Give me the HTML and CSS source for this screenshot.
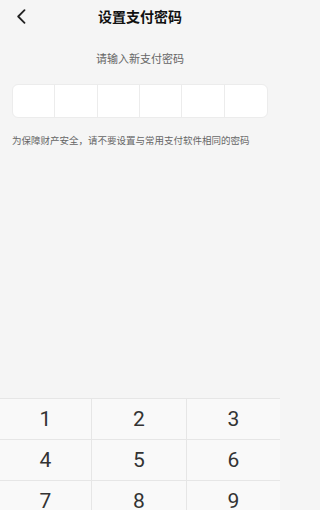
FILE: index.html
```html
<!DOCTYPE html>
<html lang="zh">
<head>
<meta charset="utf-8">
<link rel="stylesheet" href="styles.css">
</head>
<body>
<div class="page">
  <header class="nav">
    <span class="back">
      <svg width="10" height="15" viewBox="0 0 10 15"><path d="M8.5 1.2 L2.2 7.5 L8.5 13.8" fill="none" stroke="#222" stroke-width="1.8" stroke-linecap="round" stroke-linejoin="round"/></svg>
    </span>
    <h1 class="title">设置支付密码</h1>
  </header>
  <p class="subtitle">请输入新支付密码</p>
  <div class="pwd">
    <span class="cell"></span><span class="cell"></span><span class="cell"></span><span class="cell"></span><span class="cell"></span><span class="cell"></span>
  </div>
  <p class="hint">为保障财产安全，请不要设置与常用支付软件相同的密码</p>
  <div class="keyboard">
    <span class="key">1</span><span class="key">2</span><span class="key">3</span>
    <span class="key">4</span><span class="key">5</span><span class="key">6</span>
    <span class="key">7</span><span class="key">8</span><span class="key">9</span>
    <span class="key blank"></span><span class="key">0</span><span class="key blank"></span>
  </div>
</div>
</body>
</html>
```
FILE: styles.css
```css
html, body {
  margin: 0;
  padding: 0;
  height: 510px;
  overflow: hidden;
  background: #f5f5f5;
}
.page {
  width: 280px;
  height: 563px;
  display: flex;
  flex-direction: column;
  font-family: "Noto Sans CJK SC", "Noto Sans", Roboto, sans-serif;
}
.nav {
  position: relative;
  height: 33px;
  display: flex;
  align-items: center;
  justify-content: center;
}
.back {
  position: absolute;
  left: 16px;
  top: 9px;
  width: 10px;
  height: 15px;
  display: flex;
}
.title {
  margin: 0;
  font-size: 14px;
  font-weight: 700;
  color: #111;
  line-height: 33px;
}
.subtitle {
  margin: 17px 0 0;
  text-align: center;
  font-size: 11px;
  line-height: 16px;
  color: #666;
}
.pwd {
  margin: 18px 12px 0;
  height: 34px;
  box-sizing: border-box;
  background: #fff;
  border: 1px solid #ececec;
  border-radius: 6px;
  display: grid;
  grid-template-columns: repeat(6, 1fr);
  overflow: hidden;
}
.cell {
  border-right: 1px solid #ececec;
}
.cell:last-child {
  border-right: none;
}
.hint {
  margin: 15px 0 0 12px;
  font-size: 9.5px;
  line-height: 14px;
  color: #666;
}
.keyboard {
  margin-top: auto;
  display: grid;
  grid-template-columns: 92px 95px 93px;
  grid-auto-rows: 41px;
  background: #f9f9f9;
  border-top: 1px solid #e6e6e6;
}
.key {
  display: flex;
  align-items: center;
  justify-content: center;
  font-family: Roboto, "Noto Sans", sans-serif;
  font-size: 21px;
  color: #333;
  border-right: 1px solid #e6e6e6;
  border-bottom: 1px solid #e6e6e6;
}
.key:nth-child(3n) {
  border-right: none;
}
```
